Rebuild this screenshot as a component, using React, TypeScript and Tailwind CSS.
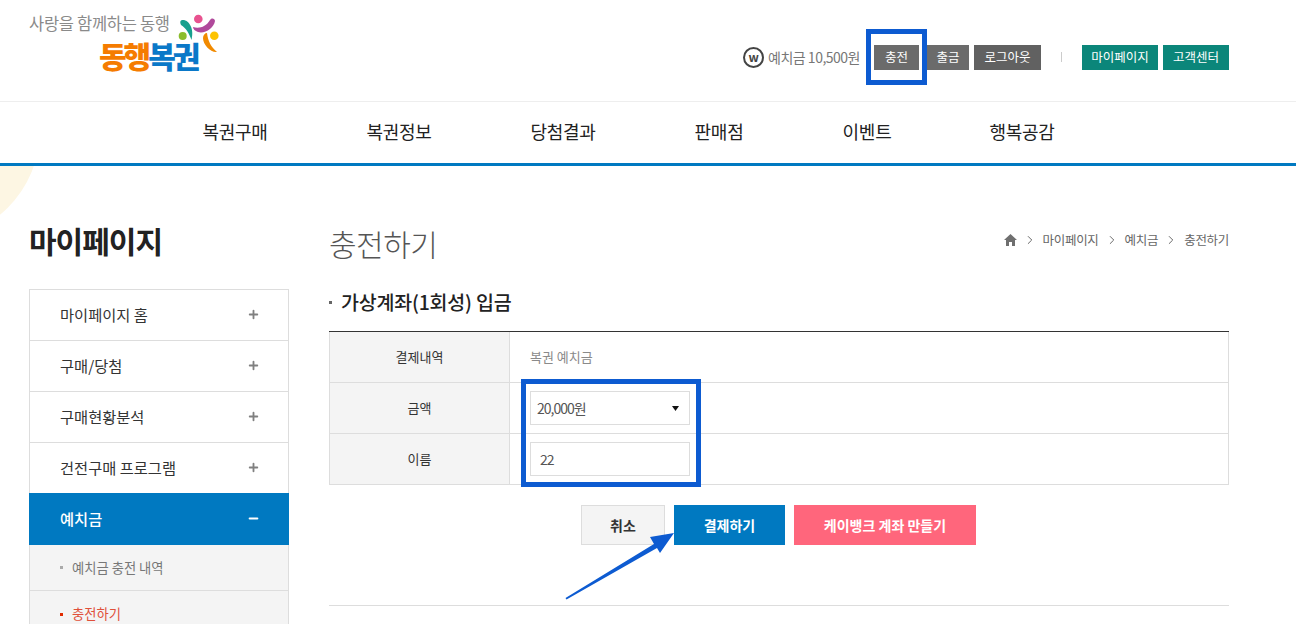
import React from "react";
import { Plus, Minus, ChevronRight } from "lucide-react";

const font = { fontFamily: '"Noto Sans CJK KR", "Noto Sans", sans-serif' };

const gnb = [
  { label: "복권구매", w: "w-[164px]" },
  { label: "복권정보", w: "w-[164px]" },
  { label: "당첨결과", w: "w-[164px]" },
  { label: "판매점", w: "w-[148px]" },
  { label: "이벤트", w: "w-[148px]" },
  { label: "행복공감", w: "w-[162px]" },
];

const side = ["마이페이지 홈", "구매/당첨", "구매현황분석", "건전구매 프로그램"];

const Logo: React.FC = () => (
  <div className="relative w-[200px] h-[70px] ml-[29px] mt-[13px]">
    <p className="text-[16.5px] leading-[20px] text-[#8a8a8a] tracking-[-0.3px] whitespace-nowrap">사랑을 함께하는 동행</p>
    <p className="absolute left-[70px] top-[22px] text-[30px] leading-[40px] font-black tracking-[-3px] whitespace-nowrap">
      <span className="text-[#f57c00]">동행</span>
      <span className="text-[#0a78c8]">복권</span>
    </p>
    <svg className="absolute left-[119px] top-0" width="74" height="56" viewBox="148 13 74 56">
      <circle cx="198.3" cy="19" r="4.3" fill="#e8528f" />
      <path d="M193 27C199 29 206 27 210 20C211 17.5 215 18 215 21C214 28 205 34 198 32C195 31 193 29 193 27z" fill="#b0499b" />
      <path d="M181 20.5C187 18 195 27 191.5 40C189 33 186 28 181 25C180 23 180 21 181 20.5z" fill="#17a08e" />
      <circle cx="182.7" cy="36" r="4" fill="#8bbd2c" />
      <circle cx="214.3" cy="35.7" r="4.3" fill="#fdc300" />
      <path d="M207 33C208 41 211 47 217 52C211 53 203 45 203 38C203 35 205 33 207 33z" fill="#f18a00" />
    </svg>
  </div>
);

const App: React.FC = () => {
  return (
    <div className="relative w-[1296px] h-[624px] overflow-hidden bg-white text-[#333]" style={font}>
      <div className="absolute left-[-180px] top-[20px] w-[220px] h-[220px] rounded-full bg-[#fdf6e3]" />

      {/* 상단 */}
      <header className="relative flex justify-between h-[102px] bg-white border-b border-[#eeeeee]">
        <Logo />
        <div className="flex items-center h-[24px] mt-[45px] mr-[67px] text-[12.5px]">
          <span className="flex items-center justify-center w-[21px] h-[21px] rounded-full border-2 border-[#444] text-[12px] leading-none font-bold text-[#444]">w</span>
          <span className="ml-[4px] text-[14px] tracking-[-0.5px] text-[#777]">예치금 10,500원</span>
          <span className="flex items-center justify-center ml-[14px] w-[45px] h-[25px] bg-[#6b6b6b] text-white">충전</span>
          <span className="flex items-center justify-center ml-[8px] w-[42px] h-[25px] bg-[#6b6b6b] text-white">출금</span>
          <span className="flex items-center justify-center ml-[5px] w-[67px] h-[25px] bg-[#616161] text-white">로그아웃</span>
          <span className="ml-[20px] w-px h-[10px] bg-[#cccccc]" />
          <span className="flex items-center justify-center ml-[20px] w-[76px] h-[25px] bg-[#0b867a] text-white">마이페이지</span>
          <span className="flex items-center justify-center ml-[5px] w-[66px] h-[25px] bg-[#0b867a] text-white">고객센터</span>
        </div>
      </header>

      {/* 메뉴 */}
      <nav className="relative flex justify-center h-[64px] bg-white border-b-[3px] border-[#0079c1] pr-[40px] pb-[3px]">
        {gnb.map((g) => (
          <span key={g.label} className={`${g.w} flex items-center justify-center text-[18px] text-[#222] tracking-[-0.3px]`}>
            {g.label}
          </span>
        ))}
      </nav>

      <div className="relative flex px-[29px]">
        {/* 왼쪽 메뉴 */}
        <aside className="w-[260px] shrink-0">
          <h2 className="mt-[52px] h-[71px] text-[30px] leading-[44px] font-bold text-[#222] tracking-[-1px]">마이페이지</h2>
          <ul className="border-x border-t border-[#dddddd] bg-white">
            {side.map((s) => (
              <li key={s} className="flex items-center justify-between h-[51px] pb-[2px] pl-[30px] pr-[28px] border-b border-[#dddddd] text-[15.3px] text-[#333]">
                {s}
                <Plus className="w-[13px] h-[13px] text-[#808080]" strokeWidth={3.4} />
              </li>
            ))}
            <li className="flex items-center justify-between h-[52px] pb-[2px] -mx-px -mt-px pl-[31px] pr-[29px] bg-[#0079c1] text-[15.3px] font-medium text-white">
              예치금
              <Minus className="w-[13px] h-[13px] text-white" strokeWidth={4} />
            </li>
            <li className="flex items-center h-[46px] pl-[30px] gap-[9px] bg-[#f4f4f4] border-b border-[#dddddd] text-[13.3px] text-[#777]">
              <span className="w-[3px] h-[3px] bg-[#aaaaaa]" />
              예치금 충전 내역
            </li>
            <li className="flex items-center h-[46px] pl-[30px] gap-[9px] bg-[#f4f4f4] text-[13.3px] text-[#e0503a]">
              <span className="w-[3px] h-[3px] bg-[#e02a00]" />
              충전하기
            </li>
          </ul>
        </aside>

        {/* 본문 */}
        <main className="w-[900px] ml-[40px]">
          <div className="flex items-start justify-between mt-[54px] h-[69px]">
            <h1 className="text-[30px] leading-[46px] font-light text-[#555] tracking-[-0.5px]">충전하기</h1>
            <div className="flex items-center gap-[5px] h-[20px] mt-[10px] text-[12.5px] text-[#666] tracking-[-0.3px]">
              <svg width="13" height="12" viewBox="0 0 13 12" fill="#6f6f6f">
                <path d="M6.5 0 0 6h2v6h3V8h3v4h3V6h2z" />
              </svg>
              <ChevronRight className="w-[14px] h-[14px] text-[#555] mx-[1px]" strokeWidth={1.5} />
              마이페이지
              <ChevronRight className="w-[14px] h-[14px] text-[#555] mx-[1px]" strokeWidth={1.5} />
              예치금
              <ChevronRight className="w-[14px] h-[14px] text-[#555] mx-[1px]" strokeWidth={1.5} />
              충전하기
            </div>
          </div>

          <h3 className="flex items-center h-[28px] pb-[2px] text-[19.5px] font-medium text-[#222] tracking-[-0.2px]">
            <span className="w-[3px] h-[3px] bg-[#666] mr-[9px]" />
            가상계좌(1회성) 입금
          </h3>

          <div className="mt-[14px] border-t border-[#333] text-[13px]">
            <div className="flex h-[51px] border-b border-[#dddddd]">
              <div className="flex items-center justify-center w-[181px] bg-[#f4f4f4] border-x border-[#dddddd] text-[#333]">결제내역</div>
              <div className="flex flex-1 items-center pl-[20px] border-r border-[#dddddd] text-[#8a8a8a]">복권 예치금</div>
            </div>
            <div className="flex h-[51px] border-b border-[#dddddd]">
              <div className="flex items-center justify-center w-[181px] bg-[#f4f4f4] border-x border-[#dddddd] text-[#333]">금액</div>
              <div className="flex flex-1 items-center pl-[20px] border-r border-[#dddddd]">
                <div className="flex items-center justify-between w-[160px] h-[34px] pl-[6px] pr-[10px] border border-[#dddddd] text-[14px] text-[#555] tracking-[-1px]">
                  20,000원
                  <svg width="7" height="5" viewBox="0 0 7 5" fill="#111"><path d="M0 0h7L3.5 5z" /></svg>
                </div>
              </div>
            </div>
            <div className="flex h-[51px] border-b border-[#dddddd]">
              <div className="flex items-center justify-center w-[181px] bg-[#f4f4f4] border-x border-[#dddddd] text-[#333]">이름</div>
              <div className="flex flex-1 items-center pl-[20px] border-r border-[#dddddd]">
                <div className="flex items-center w-[160px] h-[34px] pl-[9px] border border-[#dddddd] text-[14px] text-[#555] tracking-[-1px]">22</div>
              </div>
            </div>
          </div>

          <div className="flex justify-center gap-[9px] mt-[20px] pr-[1px] text-[14px]">
            <span className="flex items-center justify-center w-[84px] h-[40px] bg-[#f4f4f4] border border-[#dddddd] font-bold text-[#333]">취소</span>
            <span className="flex items-center justify-center w-[111px] h-[40px] bg-[#0079c1] font-bold text-white">결제하기</span>
            <span className="flex items-center justify-center w-[182px] h-[40px] bg-[#ff667c] font-bold text-white">케이뱅크 계좌 만들기</span>
          </div>

          <div className="mt-[60px] border-t border-[#dddddd]" />
        </main>
      </div>

      {/* 안내 표시 */}
      <div className="absolute left-[866px] top-[29px] w-[61px] h-[56px] border-[5px] border-[#0d5bd1]" />
      <div className="absolute left-[521px] top-[379px] w-[180px] h-[108px] border-[5px] border-[#0d5bd1]" />
      <svg className="absolute left-[560px] top-[530px]" width="116" height="72" viewBox="560 530 116 72">
        <path d="M565.5 598 L654 544 L650 537 L674 533 L660 553 L657 548 L566.5 599.5z" fill="#0d5bd1" />
      </svg>
    </div>
  );
};

export default App;
